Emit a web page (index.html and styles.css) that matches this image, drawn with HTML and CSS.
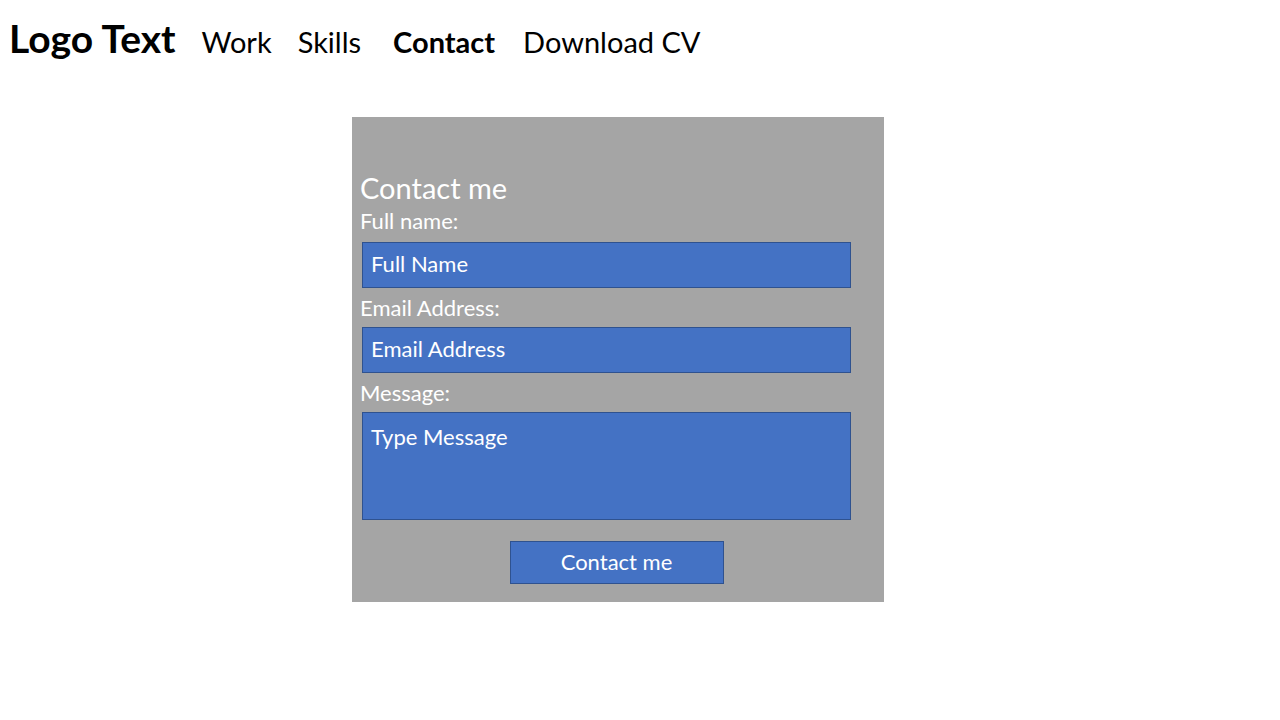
FILE: index.html
```html
<!DOCTYPE html>
<html lang="en">
<head>
<meta charset="utf-8">
<meta name="viewport" content="width=device-width, initial-scale=1">
<title>Contact</title>
<link rel="stylesheet" href="styles.css">
</head>
<body>
<header class="site-header">
  <a class="logo" href="#">Logo Text</a>
  <nav class="site-nav" aria-label="Main">
    <a class="nav-link" href="#">Work</a>
    <a class="nav-link" href="#">Skills</a>
    <a class="nav-link nav-link-current" href="#" aria-current="page">Contact</a>
    <a class="nav-link" href="#">Download CV</a>
  </nav>
</header>
<main class="page">
  <form class="contact-form">
    <h1 class="form-title">Contact me</h1>
    <label class="form-label" for="name">Full name:</label>
    <input class="form-field" id="name" type="text" placeholder="Full Name">
    <label class="form-label" for="email">Email Address:</label>
    <input class="form-field" id="email" type="email" placeholder="Email Address">
    <label class="form-label" for="message">Message:</label>
    <textarea class="form-field form-message" id="message" placeholder="Type Message"></textarea>
    <button class="form-submit" type="button">Contact me</button>
  </form>
</main>
</body>
</html>
```

FILE: styles.css
```css
* {
  box-sizing: border-box;
}

body {
  margin: 0;
  background: #fff;
  color: #000;
  font-family: Lato, sans-serif;
  font-size: 22px;
  line-height: 24px;
}

.site-header {
  display: flex;
  flex-wrap: wrap;
  align-items: baseline;
  column-gap: 26px;
  padding: 14px 9px 0;
}

.logo,
.nav-link {
  color: inherit;
  text-decoration: none;
}

.logo {
  font-size: 39px;
  font-weight: 700;
  line-height: 48px;
}

.site-nav {
  display: flex;
  flex-wrap: wrap;
  column-gap: 26px;
  font-size: 29px;
  line-height: 36px;
}

.nav-link-current {
  padding: 0 2px 0 6px;
  font-weight: 700;
}

.page {
  padding: 55px 8px 40px 27.5%;
}

.contact-form {
  display: flex;
  flex-direction: column;
  max-width: 532px;
  padding: 52px 33px 18px 8px;
  background: #a5a5a5;
  color: #fff;
}

.form-title {
  margin: 0;
  font-size: 29px;
  font-weight: 400;
  line-height: 38px;
}

.form-label {
  padding: 2px 0 7px;
}

.form-title + .form-label {
  padding-bottom: 9px;
}

.form-field,
.form-submit {
  border: 1px solid #2f528f;
  border-radius: 0;
  background: #4472c4;
  color: #fff;
  font: inherit;
}

.form-field {
  margin: 0 0 6px 2px;
  padding: 9px 8px 11px;
}

.form-field::placeholder {
  color: #fff;
  opacity: 1;
}

.form-message {
  height: 108px;
  margin-bottom: 21px;
  padding-top: 12px;
  resize: none;
}

.form-submit {
  align-self: center;
  width: 214px;
  margin-left: 22px;
  padding: 8px 8px 9px;
}
```
